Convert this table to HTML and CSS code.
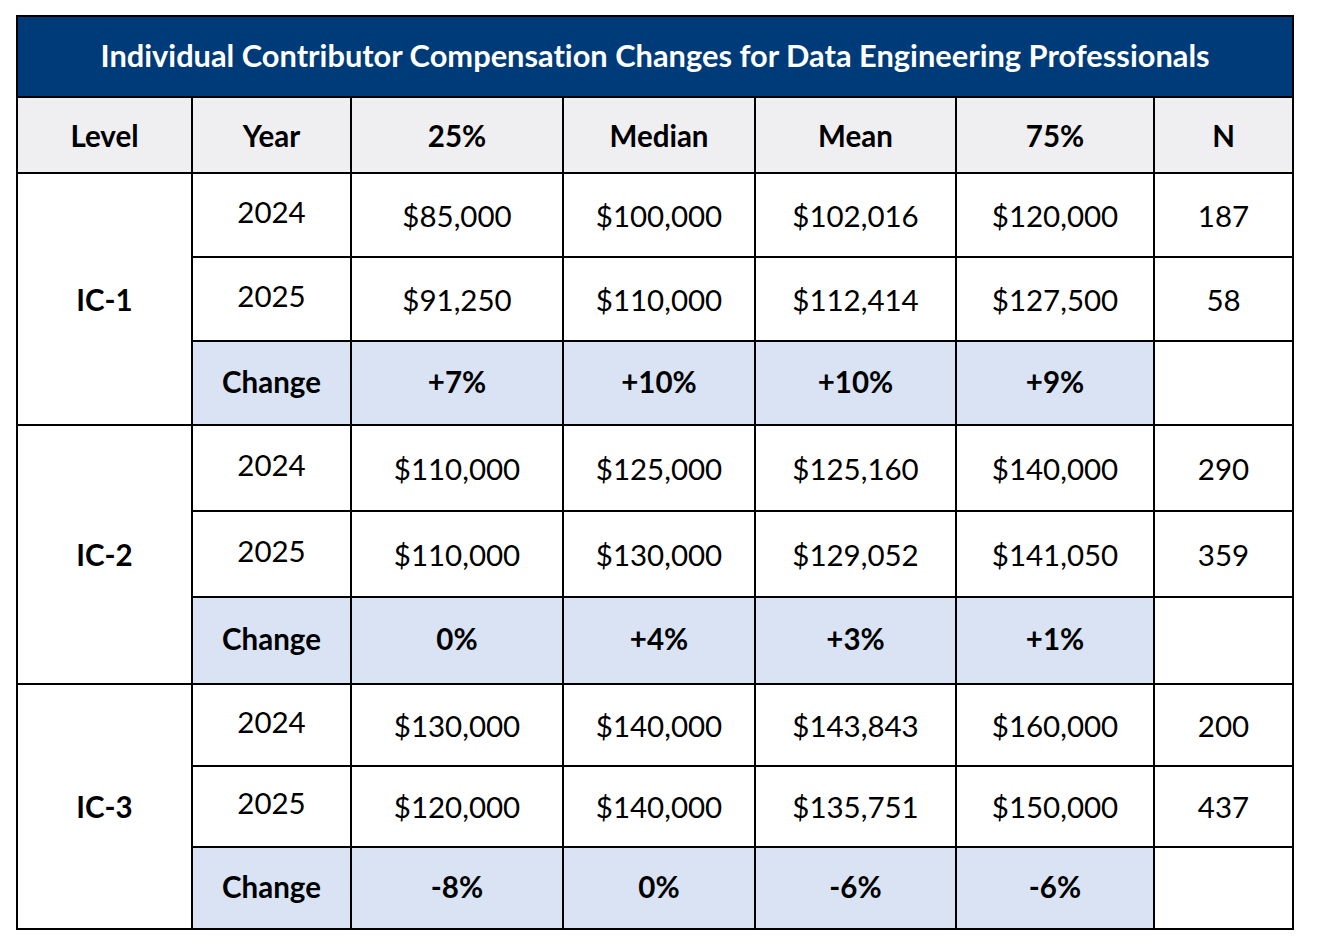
FILE: index.html
```html
<!DOCTYPE html>
<html>
<head>
<meta charset="utf-8">
<link rel="stylesheet" href="styles.css">
</head>
<body>
<table class="comp">
  <colgroup>
    <col class="c-level"><col class="c-year"><col class="c-p25"><col class="c-med"><col class="c-mean"><col class="c-p75"><col class="c-n">
  </colgroup>
  <thead>
    <tr class="title-row"><th colspan="7">Individual Contributor Compensation Changes for Data Engineering Professionals</th></tr>
    <tr class="head-row"><th>Level</th><th>Year</th><th>25%</th><th>Median</th><th>Mean</th><th>75%</th><th>N</th></tr>
  </thead>
  <tbody>
    <tr class="r1"><td class="level" rowspan="3">IC-1</td><td class="year">2024</td><td>$85,000</td><td>$100,000</td><td>$102,016</td><td>$120,000</td><td>187</td></tr>
    <tr class="r2"><td class="year">2025</td><td>$91,250</td><td>$110,000</td><td>$112,414</td><td>$127,500</td><td>58</td></tr>
    <tr class="r3 change"><td class="ch">Change</td><td class="ch">+7%</td><td class="ch">+10%</td><td class="ch">+10%</td><td class="ch">+9%</td><td></td></tr>
    <tr class="r4"><td class="level" rowspan="3">IC-2</td><td class="year">2024</td><td>$110,000</td><td>$125,000</td><td>$125,160</td><td>$140,000</td><td>290</td></tr>
    <tr class="r5"><td class="year">2025</td><td>$110,000</td><td>$130,000</td><td>$129,052</td><td>$141,050</td><td>359</td></tr>
    <tr class="r6 change"><td class="ch">Change</td><td class="ch">0%</td><td class="ch">+4%</td><td class="ch">+3%</td><td class="ch">+1%</td><td></td></tr>
    <tr class="r7"><td class="level" rowspan="3">IC-3</td><td class="year">2024</td><td>$130,000</td><td>$140,000</td><td>$143,843</td><td>$160,000</td><td>200</td></tr>
    <tr class="r8"><td class="year">2025</td><td>$120,000</td><td>$140,000</td><td>$135,751</td><td>$150,000</td><td>437</td></tr>
    <tr class="r9 change"><td class="ch">Change</td><td class="ch">-8%</td><td class="ch">0%</td><td class="ch">-6%</td><td class="ch">-6%</td><td></td></tr>
  </tbody>
</table>
</body>
</html>
```

FILE: styles.css
```css
html, body {
  margin: 0;
  padding: 0;
  background: #ffffff;
}
body {
  padding: 15px 0 0 16px;
  font-family: Lato, "Liberation Sans", sans-serif;
  font-variant-ligatures: none;
  color: #000;
}
.comp {
  border-collapse: collapse;
  table-layout: fixed;
  width: 1276px;
}
.c-level { width: 175px; }
.c-year { width: 159px; }
.c-p25 { width: 212px; }
.c-med { width: 192px; }
.c-mean { width: 201px; }
.c-p75 { width: 198px; }
.c-n { width: 139px; }
.comp th, .comp td {
  border: 2px solid #000;
  text-align: center;
  vertical-align: middle;
  padding: 0;
}
.comp td {
  font-size: 29.5px;
  font-weight: 400;
}
.title-row th {
  background: #003b79;
  color: #fff;
  font-size: 30.8px;
  font-weight: 700;
  height: 76px;
  padding-bottom: 3px;
}
.head-row th {
  background: #efeef1;
  font-size: 29.5px;
  font-weight: 700;
  height: 74px;
}
.comp td.level {
  font-weight: 700;
  background: #fff;
}
.comp td.year {
  padding-bottom: 8px;
}
.comp td.ch {
  background: #dae3f3;
  font-weight: 700;
  padding-bottom: 4px;
}
.r1, .r2, .r3 { height: 84px; }
.r4, .r5 { height: 86px; }
.r6 { height: 87px; }
.r7 { height: 82px; }
.r8 { height: 81px; }
.r9 { height: 82px; }
```
